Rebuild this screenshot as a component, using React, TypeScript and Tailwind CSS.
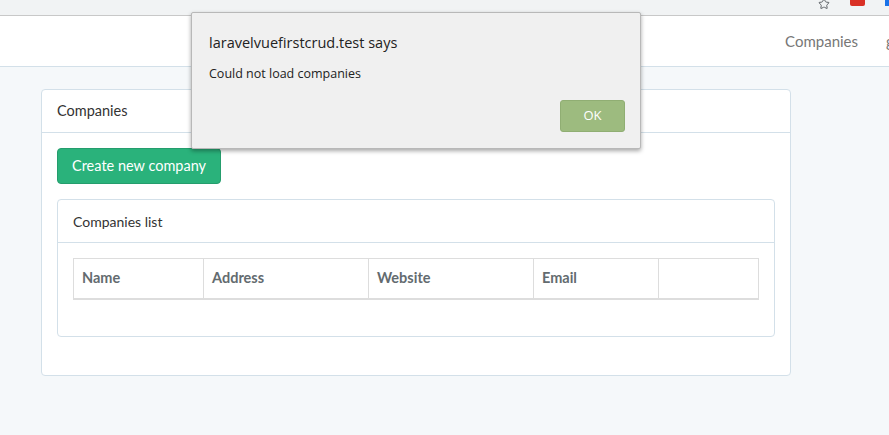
import { Star } from 'lucide-react';

const columns = [
  { label: 'Name', width: 'w-[130px]' },
  { label: 'Address', width: 'w-[165px]' },
  { label: 'Website', width: 'w-[165px]' },
  { label: 'Email', width: 'w-[125px]' },
  { label: '', width: '' },
];

function BrowserStrip() {
  return (
    <div className="h-[16px] bg-[#f1f3f4] border-b border-[#c8c8c8] flex items-center justify-end gap-[20px] overflow-hidden">
      <Star className="w-[12px] h-[12px] text-[#5f6368] -mt-[8px]" strokeWidth={2} />
      <div className="w-[15px] h-[6px] bg-[#d93025] rounded-b-[2px] -mt-[10px]" />
      <div className="w-[4px] h-[6px] bg-[#1a73e8] -mt-[10px]" />
    </div>
  );
}

function Navbar() {
  return (
    <nav className="h-[51px] bg-white border-b border-[#d3e0e9] flex items-center justify-end overflow-hidden">
      <a className="text-[15px] text-[#777] mr-[28px] whitespace-nowrap">Companies</a>
      <a className="text-[15px] text-[#777] -mr-[33px] whitespace-nowrap">guest</a>
    </nav>
  );
}

function AlertDialog() {
  return (
    <div
      className="absolute left-[191px] top-[12px] w-[450px] h-[137px] bg-[#f0f0f0] border border-[#b8b8b8] rounded-[2px] shadow-[0_2px_4px_rgba(0,0,0,0.35)] px-[17px] pt-[21px] text-[#222]"
      style={{ fontFamily: '"Open Sans", "Noto Sans", sans-serif' }}
    >
      <div className="text-[14.5px] leading-[18px]">laravelvuefirstcrud.test says</div>
      <div className="text-[12.5px] leading-[16px] mt-[14px]">Could not load companies</div>
      <div className="flex justify-end mt-[18px] -mr-[2px]">
        <button className="w-[65px] h-[32px] bg-[#9dbb7f] border border-[#90ae73] rounded-[3px] text-white text-[13px]">
          OK
        </button>
      </div>
    </div>
  );
}

export default function App() {
  return (
    <div
      className="relative w-[889px] h-[435px] bg-[#f5f8fa] overflow-hidden text-[#636b6f]"
      style={{ fontFamily: 'Lato, "Noto Sans", sans-serif' }}
    >
      <BrowserStrip />
      <Navbar />

      <div className="pl-[41px] pt-[22px]">
        <div className="w-[750px] bg-white border border-[#d3e0e9] rounded-[4px]">
          <div className="h-[43px] px-[15px] flex items-center border-b border-[#d3e0e9] text-[14.5px] text-[#333]">
            Companies
          </div>
          <div className="px-[15px] pt-[15px] pb-[38px]">
            <button className="h-[36px] px-[14px] bg-[#2ab27b] border border-[#259d6d] rounded-[4px] text-white text-[14.5px]">
              Create new company
            </button>

            <div className="mt-[15px] bg-white border border-[#d3e0e9] rounded-[4px]">
              <div className="h-[43px] px-[15px] flex items-center border-b border-[#d3e0e9] text-[14px] text-[#333]">
                Companies list
              </div>
              <div className="px-[15px] pt-[15px] pb-[36px]">
                <table className="w-full border border-[#ddd] border-collapse">
                  <thead>
                    <tr>
                      {columns.map((col) => (
                        <th
                          key={col.label || 'actions'}
                          className={`${col.width} h-[40px] px-[8px] text-left text-[14.5px] font-bold text-[#636b6f] border border-[#ddd] border-b-2`}
                        >
                          {col.label}
                        </th>
                      ))}
                    </tr>
                  </thead>
                </table>
              </div>
            </div>
          </div>
        </div>
      </div>

      <AlertDialog />
    </div>
  );
}
